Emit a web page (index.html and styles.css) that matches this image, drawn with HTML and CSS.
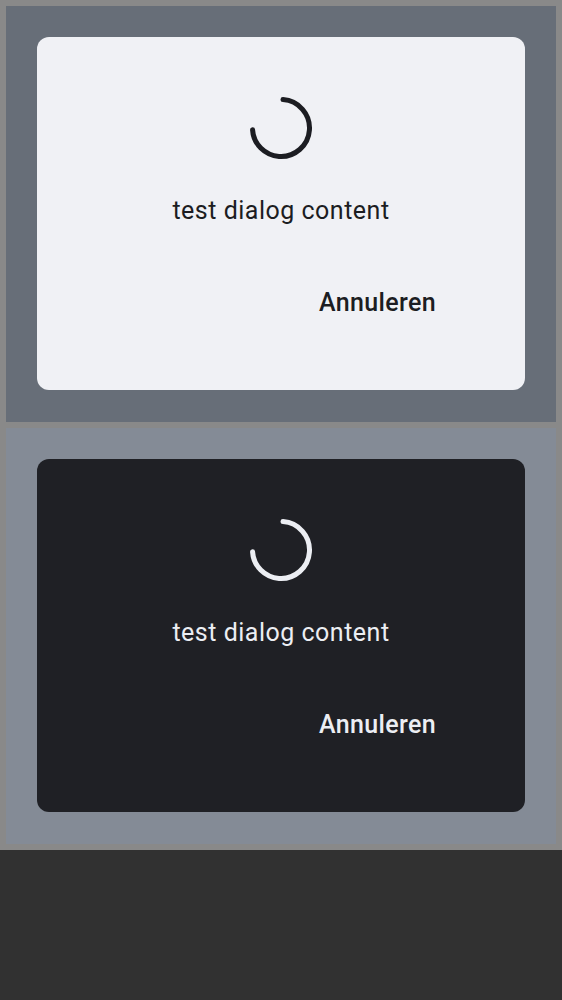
FILE: index.html
```html
<!DOCTYPE html>
<html lang="nl">
<head>
<meta charset="utf-8">
<title>Dialog</title>
<link rel="stylesheet" href="styles.css">
</head>
<body>
<div class="stage">
  <section class="panel panel-light">
    <div class="dialog dialog-light">
      <svg class="spinner" width="64" height="64" viewBox="0 0 64 64" aria-hidden="true">
        <circle cx="32" cy="32" r="28.5" fill="none" stroke="currentColor" stroke-width="5" stroke-linecap="round" stroke-dasharray="130.3 200" transform="rotate(-86 32 32)"/>
      </svg>
      <p class="content">test dialog content</p>
      <div class="actions"><button class="btn">Annuleren</button></div>
    </div>
  </section>
  <section class="panel panel-dark">
    <div class="dialog dialog-dark">
      <svg class="spinner" width="64" height="64" viewBox="0 0 64 64" aria-hidden="true">
        <circle cx="32" cy="32" r="28.5" fill="none" stroke="currentColor" stroke-width="5" stroke-linecap="round" stroke-dasharray="130.3 200" transform="rotate(-86 32 32)"/>
      </svg>
      <p class="content">test dialog content</p>
      <div class="actions"><button class="btn">Annuleren</button></div>
    </div>
  </section>
</div>
</body>
</html>
```

FILE: styles.css
```css
html, body {
  margin: 0;
  padding: 0;
}
body {
  background: #313131;
  font-family: Roboto, "Noto Sans", sans-serif;
  min-height: 1000px;
}
.stage {
  background: #898989;
  padding: 6px;
  display: flex;
  flex-direction: column;
  gap: 6px;
}
.panel {
  height: 416px;
  box-sizing: border-box;
  padding: 31px 31px 32px;
}
.panel-light { background: #676e78; }
.panel-dark { background: #848b96; }
.dialog {
  height: 353px;
  box-sizing: border-box;
  border-radius: 12px;
  display: flex;
  flex-direction: column;
  align-items: center;
  padding-top: 59px;
}
.dialog-light { background: #f0f1f5; color: #1c1d22; }
.dialog-dark { background: #1f2025; color: #eceef3; }
.spinner {
  display: block;
  width: 64px;
  height: 64px;
}
.content {
  margin: 36px 0 0;
  font-size: 25px;
  line-height: 30px;
  font-weight: 400;
  letter-spacing: 0.5px;
}
.actions {
  align-self: stretch;
  display: flex;
  justify-content: flex-end;
  margin-top: 62px;
  padding-right: 89px;
}
.btn {
  font-family: inherit;
  font-size: 25px;
  line-height: 30px;
  font-weight: 500;
  letter-spacing: 0.35px;
  color: inherit;
  background: none;
  border: 0;
  padding: 0;
}
```
